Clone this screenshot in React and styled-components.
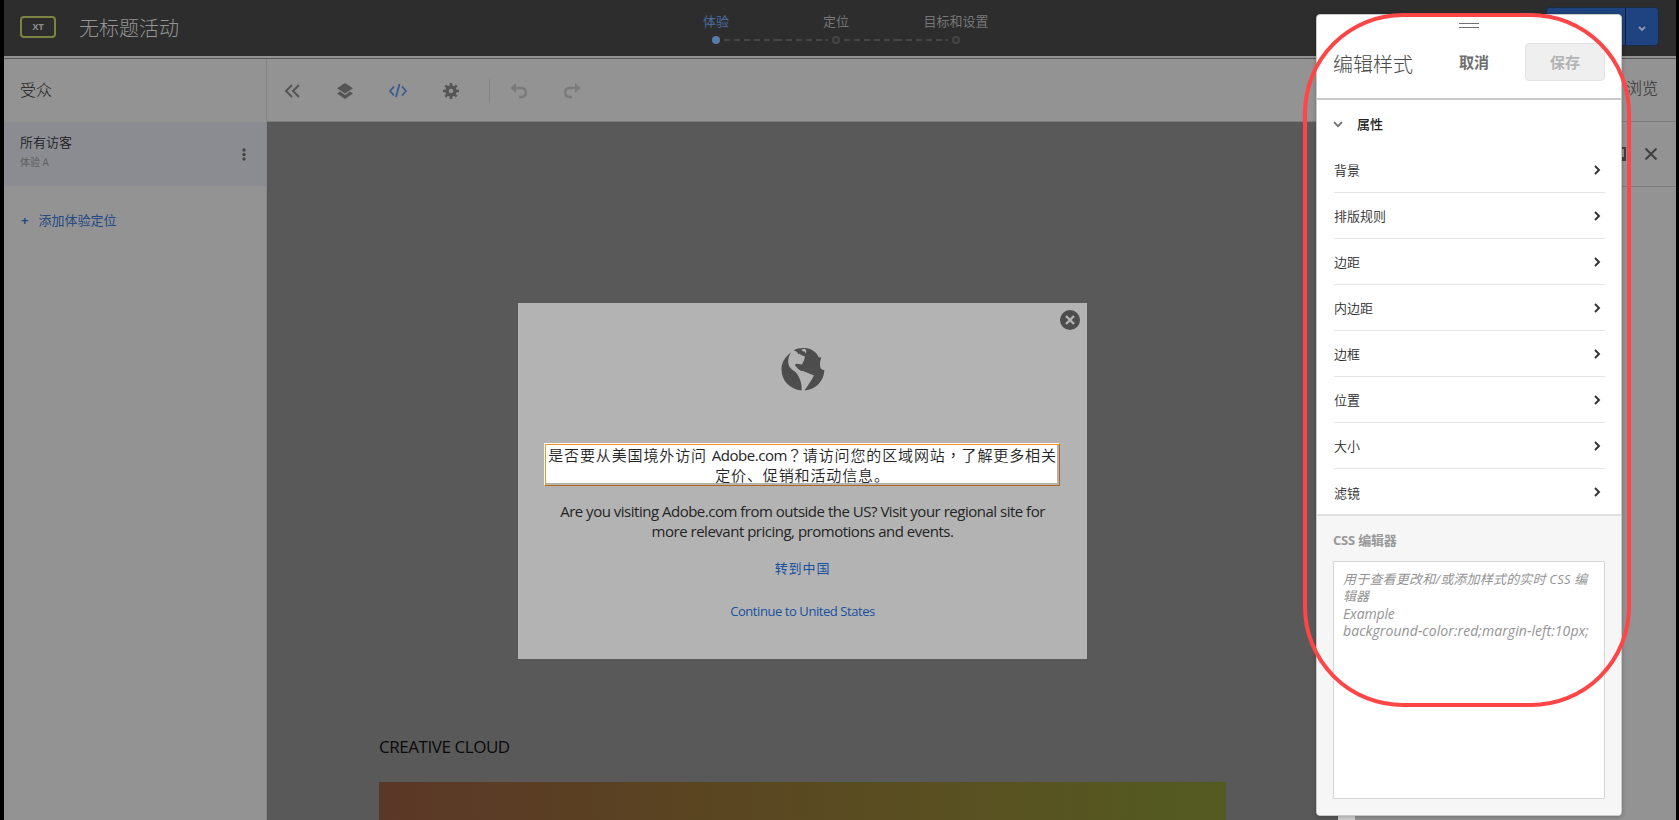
import React from 'react';
import styled, { createGlobalStyle } from 'styled-components';

const Global = createGlobalStyle`
  * { box-sizing: border-box; }
  body { margin: 0; background: #000; font-family: "Open Sans", "Noto Sans CJK SC", sans-serif; }
  button, textarea { font-family: inherit; }
`;

const Frame = styled.div`
  position: relative;
  display: flex;
  flex-direction: column;
  width: 1679px;
  height: 820px;
  padding: 0 3px 0 4px;
  overflow: hidden;
  background: #000;
`;

const Header = styled.header`
  flex: none;
  display: flex;
  justify-content: space-between;
  height: 56px;
  padding-left: 16px;
  background: #2d2d2d;
`;
const HeaderLeft = styled.div`
  display: flex;
  width: 620px;
`;
const TypeBadge = styled.div`
  width: 36px;
  height: 22px;
  margin-top: 16px;
  border: 2px solid #7d8442;
  border-radius: 4px;
  color: #8d8d8d;
  font-size: 9px;
  font-weight: 700;
  line-height: 17px;
  text-align: center;
`;
const ActivityName = styled.h1`
  margin: 0 0 0 23px;
  font-size: 20px;
  font-weight: 300;
  line-height: 58px;
  color: #959595;
`;
const Steps = styled.ol`
  display: flex;
  flex: 1;
  list-style: none;
  margin: 0;
  padding: 0 0 0 16px;
`;
const Step = styled.li`
  display: flex;
  flex-direction: column;
  align-items: center;
  width: 120px;
  color: ${(p) => (p.$active ? '#4a6d9f' : '#767676')};
`;
const StepLabel = styled.span`
  margin-top: 11px;
  font-size: 13px;
  line-height: 20px;
`;
const StepTrack = styled.div`
  display: grid;
  grid-template-columns: 56px 8px 56px;
  align-items: center;
  height: 8px;
  margin-top: 5px;
`;
const Dashes = styled.i`
  height: 2px;
  background: ${(p) => (p.$hidden ? 'none' : 'repeating-linear-gradient(90deg, #444 0 6px, transparent 6px 9.9px)')};
  margin: ${(p) => (p.$start ? '0 0 0 4px' : '0 4px 0 0')};
`;
const Dot = styled.i`
  width: 8px;
  height: 8px;
  border-radius: 50%;
  border: 2px solid ${(p) => (p.$active ? '#587ba8' : '#444')};
  background: ${(p) => (p.$active ? '#587ba8' : 'transparent')};
`;
const SplitButton = styled.div`
  display: flex;
  gap: 1px;
  width: 113px;
  height: 39px;
  margin: 7px 17px 0 0;
  border: 1px solid #1b2c48;
  border-radius: 4px;
  background: #101c30;
  overflow: hidden;
`;
const SplitPart = styled.button`
  flex: ${(p) => (p.$main ? 1 : 'none')};
  width: 32px;
  padding: 0;
  border: 0;
  background: #1f4380;
  color: #8f9bac;
`;

const Seam = styled.div`
  flex: none;
  height: 3px;
  background: #939393;
  border-bottom: 1px solid #585858;
`;
const Workspace = styled.main`
  flex: 1;
  display: flex;
  min-height: 0;
`;
const Sidebar = styled.aside`
  width: 263px;
  border-right: 1px solid #868686;
  background: #939393;
`;
const SidebarTitle = styled.h2`
  margin: 0;
  height: 63px;
  padding-left: 16px;
  font-size: 16px;
  font-weight: 300;
  line-height: 63px;
  color: #1c1c1c;
`;
const Audience = styled.div`
  display: flex;
  justify-content: space-between;
  align-items: center;
  height: 64px;
  padding: 0 17px 0 16px;
  background: #8b8c92;
`;
const AudienceName = styled.div`
  margin-top: -5px;
  font-size: 13px;
  font-weight: 350;
  line-height: 20px;
  color: #1c1c1c;
`;
const AudienceNote = styled.div`
  margin-top: 1px;
  font-size: 10px;
  line-height: 18px;
  color: #606060;
`;
const AddLink = styled.a`
  display: flex;
  gap: 10px;
  margin: 24px 0 0 17px;
  font-size: 13px;
  line-height: 20px;
  color: #224985;
`;

const Stage = styled.section`
  display: flex;
  flex-direction: column;
  width: 1088px;
`;
const Toolbar = styled.div`
  flex: none;
  display: flex;
  align-items: center;
  height: 63px;
  padding: 1px 0 0 13px;
  gap: 29px;
  border-bottom: 1px solid #7c7c7c;
  background: #939393;
  color: #555;
`;
const ToolIcon = styled.svg`
  flex: none;
  width: 24px;
  height: 24px;
  fill: none;
  stroke: currentColor;
  stroke-width: 2;
  color: ${(p) => p.$tone || '#555'};
`;
const ToolRule = styled.i`
  width: 1px;
  height: 24px;
  margin: 0 -12px 0 -3px;
  background: #858585;
`;
const Viewport = styled.div`
  flex: 1;
  display: flex;
  min-height: 0;
`;
const Page = styled.div`
  display: flex;
  flex-direction: column;
  align-items: center;
  width: 1071px;
  padding-top: 181px;
  background: #595959;
`;
const Scrollbar = styled.div`
  width: 17px;
  background: #d2d2d2;
`;
const Modal = styled.div`
  flex: none;
  display: flex;
  flex-direction: column;
  align-items: center;
  width: 569px;
  height: 356px;
  background: #b3b3b3;
  color: #242424;
`;
const ModalTop = styled.div`
  align-self: stretch;
  display: flex;
  justify-content: flex-end;
  padding: 7px 7px 0 0;
`;
const Globe = styled.svg`
  width: 44px;
  height: 44px;
  margin-top: 17px;
`;
const SelectedText = styled.div`
  width: 515px;
  height: 42px;
  margin-top: 53px;
  border: 1px solid;
  border-color: #f7931e #b5671a #b5671a #f7931e;
  box-shadow: -1px -1px 0 #fff;
  background: linear-gradient(#fff, #fff) 0 0 / 511px 38px no-repeat #b3b3b3;
  font-size: 15px;
  font-weight: 350;
  letter-spacing: 0.87px;
  line-height: 20px;
  text-align: center;
  white-space: nowrap;
`;
const Latin = styled.span`
  font-weight: 400;
  letter-spacing: -0.45px;
`;
const MidPunct = styled.span`
  font-family: "Noto Sans CJK TC", sans-serif;
`;
const Paragraph = styled.p`
  margin: 15px 0 0;
  font-size: 15px;
  letter-spacing: -0.49px;
  line-height: 20px;
  text-align: center;
`;
const ModalLink = styled.a`
  margin-top: ${(p) => p.$top}px;
  font-size: 13px;
  letter-spacing: ${(p) => p.$spacing}px;
  line-height: 20px;
  color: #17509f;
`;
const SectionTitle = styled.h3`
  align-self: flex-start;
  margin: 76px 0 0 112px;
  font-size: 17px;
  font-weight: 400;
  letter-spacing: -0.45px;
  line-height: 24px;
  color: #0a0a0a;
`;
const Hero = styled.div`
  width: 847px;
  height: 60px;
  margin-top: 23px;
  flex: none;
  background: linear-gradient(90deg, #5b3727, #5a4521 38%, #595121 70%, #535b21);
`;

const Inspector = styled.aside`
  flex: 1;
  background: #939393;
`;
const InspectorRow = styled.div`
  display: flex;
  align-items: center;
  justify-content: flex-end;
  height: ${(p) => p.$height}px;
  padding: 0 18px ${(p) => p.$lift || 0}px 0;
  gap: 18px;
  border-bottom: 1px solid #7c7c7c;
  font-size: 16px;
  font-weight: 350;
  color: #444;
`;

const Panel = styled.section`
  position: absolute;
  left: 1316px;
  top: 14px;
  display: flex;
  flex-direction: column;
  width: 306px;
  height: 802px;
  border: 1px solid #c9c9c9;
  border-radius: 4px;
  background: #fff;
  box-shadow: 0 1px 4px rgba(0, 0, 0, 0.25);
  overflow: hidden;
`;
const Grip = styled.div`
  flex: none;
  align-self: center;
  width: 20px;
  height: 5px;
  margin-top: 8px;
  border: solid #707070;
  border-width: 1px 0;
`;
const PanelHeader = styled.div`
  flex: none;
  display: flex;
  align-items: center;
  height: 72px;
  padding: 0 16px 0;
  border-bottom: 2px solid #c9c9c9;
`;
const PanelTitle = styled.h2`
  flex: 1;
  margin: 0;
  font-size: 20px;
  font-weight: 300;
  color: #4a4a4a;
`;
const PanelButton = styled.button`
  width: ${(p) => p.$width}px;
  height: 38px;
  margin: 0 ${(p) => p.$gap || 0}px 2px 0;
  padding: 0 0 1px;
  border: 1px solid ${(p) => (p.$disabled ? '#e3e3e3' : 'transparent')};
  border-radius: 4px;
  background: ${(p) => (p.$disabled ? '#efefef' : 'none')};
  color: ${(p) => (p.$disabled ? '#b3b3b3' : '#6e6e6e')};
  font-size: 15px;
  font-weight: 700;
`;
const GroupTitle = styled.div`
  flex: none;
  display: flex;
  align-items: center;
  gap: 14px;
  height: 47px;
  padding-left: 16px;
  font-size: 13px;
  font-weight: 500;
  color: #222;
  svg { margin-top: 2px; }
`;
const PropertyList = styled.ul`
  list-style: none;
  margin: 0;
  padding: 0 16px 0 17px;
`;
const Property = styled.li`
  display: flex;
  align-items: center;
  justify-content: space-between;
  height: 46px;
  padding-right: 4px;
  border-bottom: 1px solid #e6e6e6;
  font-size: 13px;
  font-weight: 350;
  color: #2c2c2c;
  &:last-child { border-bottom: 0; }
`;
const Editor = styled.div`
  flex: 1;
  display: flex;
  flex-direction: column;
  margin-top: -1px;
  padding: 14px 16px;
  border-top: 2px solid #e0e0e0;
  background: #f6f6f6;
`;
const EditorTitle = styled.label`
  font-size: 13px;
  font-weight: 700;
  letter-spacing: -0.2px;
  line-height: 20px;
  color: #999;
`;
const CssInput = styled.div`
  height: 238px;
  margin-top: 11px;
  padding: 9px 0 0 9px;
  border: 1px solid #d5d5d5;
  background: #fff;
  color: #949494;
  font-style: italic;
  white-space: pre;
`;
const CodeLine = styled.div`
  height: 17px;
  font-size: ${(p) => p.$size || 13}px;
  line-height: 17px;
  letter-spacing: ${(p) => p.$spacing || 0}px;
`;
const Callout = styled.div`
  position: absolute;
  left: 1303px;
  top: 13px;
  width: 328px;
  height: 694px;
  border: 4px solid #ff4545;
  border-radius: 100px;
  pointer-events: none;
`;

const properties = ['背景', '排版规则', '边距', '内边距', '边框', '位置', '大小', '滤镜'];
const steps = ['体验', '定位', '目标和设置'];

const ToolIcons = () => (
  <>
    <ToolIcon><path d="M12 6 6 12l6 6M19 6l-6 6 6 6" /></ToolIcon>
    <ToolIcon>
      <path fill="currentColor" stroke="none" d="M12 4 20 9.3 12 14.5 4 9.3ZM4 14.5l3-2 5 3.4 5-3.4 3 2L12 20Z" />
    </ToolIcon>
    <ToolIcon $tone="#395b91"><path d="M8 7.5 4 12l4 4.500M16 7.500l4 4.500-4 4.500M13.500 5l-3.500 13" strokeWidth="1.8" /></ToolIcon>
    <ToolIcon>
      <circle cx="12" cy="12" r="4" strokeWidth="3.4" />
      <path strokeWidth="2.6" d="M12 4v3M12 17v3M4 12h3M17 12h3M6.3 6.3l2 2M15.7 15.7l2 2M6.3 17.7l2-2M15.7 8.3l2-2" />
    </ToolIcon>
    <ToolRule />
    <ToolIcon $tone="#7a7a7a">
      <path d="M8 9h7.2a4.6 4.6 0 0 1 0 9H12" strokeWidth="2.4" /><path fill="currentColor" stroke="none" d="M9 4v10L3.5 9Z" />
    </ToolIcon>
    <ToolIcon $tone="#7a7a7a">
      <path d="M16 9H8.800a4.600 4.600 0 0 0 0 9H12" strokeWidth="2.4" /><path fill="currentColor" stroke="none" d="M15 4v10L20.500 9Z" />
    </ToolIcon>
  </>
);

export default function App() {
  return (
    <Frame>
      <Global />
      <Header>
        <HeaderLeft>
          <TypeBadge>XT</TypeBadge>
          <ActivityName>无标题活动</ActivityName>
        </HeaderLeft>
        <Steps>
          {steps.map((s, i) => (
            <Step key={s} $active={i === 0}>
              <StepLabel>{s}</StepLabel>
              <StepTrack>
                <Dashes $hidden={i === 0} />
                <Dot $active={i === 0} />
                <Dashes $start $hidden={i === 2} />
              </StepTrack>
            </Step>
          ))}
        </Steps>
        <SplitButton>
          <SplitPart $main />
          <SplitPart>
            <svg width="8" height="6" fill="none" stroke="currentColor" strokeWidth="1.8"><path d="m1 1 3 3 3-3" /></svg>
          </SplitPart>
        </SplitButton>
      </Header>
      <Seam />
      <Workspace>
        <Sidebar>
          <SidebarTitle>受众</SidebarTitle>
          <Audience>
            <div>
              <AudienceName>所有访客</AudienceName>
              <AudienceNote>体验 A</AudienceNote>
            </div>
            <svg width="10" height="14" viewBox="0 -1 10 14" fill="#474747">
              <circle cx="5" cy="2" r="1.7" /><circle cx="5" cy="6.5" r="1.7" /><circle cx="5" cy="11" r="1.7" />
            </svg>
          </Audience>
          <AddLink><b>+</b><span>添加体验定位</span></AddLink>
        </Sidebar>
        <Stage>
          <Toolbar><ToolIcons /></Toolbar>
          <Viewport>
            <Page>
              <Modal>
                <ModalTop>
                  <svg width="20" height="20">
                    <circle cx="10" cy="10" r="10" fill="#4d4d4d" />
                    <path d="m6 6 8 8m0-8-8 8" stroke="#b3b3b3" strokeWidth="2.4" />
                  </svg>
                </ModalTop>
                <Globe viewBox="0 0 44 44" fill="#4d4d4d">
                  <path d="M10 5.500C3.500 10 .5 16 .5 22.500c0 11 8.500 20 20 21 .8-5-1-11-4-16-2-3.500-5.500-4.500-7.500-7C6 16 7 10 10 5.500Z" />
                  <path d="M12.500 3.200C18 .5 26 .2 31 3c3 1.600 5.500 4.300 6.500 7l3 .8c-1.500 2.500-1.500 4.500-1.500 8 .5 3 1.500 4.200 4.400 4.200C43 34 35 42.500 23.500 43.500c3-4.500 6-8.500 9.500-15L22 24c-3 .5-5-2.500-8-5.500.5-1.500 1-2 3-1.500l4 .500c1-2 2.500-5 3-8l-4-1.500-1.500-1.500-1 1c-1-3-3-3.500-5-4.300Z" />
                  <path d="M20 2.500c1.500 1.500 2.500 2.500 4 2l.500 2.200c1.300-1 1.200-3.500-.500-5Z" fill="#b3b3b3" />
                </Globe>
                <SelectedText>
                  是否要从美国境外访问 <Latin>Adobe.com</Latin><MidPunct lang="zh-TW">？</MidPunct>请访问您的区域网站<MidPunct lang="zh-TW">，</MidPunct>了解更多相关<br />定价、促销和活动信息。
                </SelectedText>
                <Paragraph>
                  Are you visiting Adobe.com from outside the US? Visit your regional site for<br />
                  more relevant pricing, promotions and events.
                </Paragraph>
                <ModalLink $top={17} $spacing={0.9}>转到中国</ModalLink>
                <ModalLink $top={23} $spacing={-0.43}>Continue to United States</ModalLink>
              </Modal>
              <SectionTitle>CREATIVE CLOUD</SectionTitle>
              <Hero />
            </Page>
            <Scrollbar />
          </Viewport>
        </Stage>
        <Inspector>
          <InspectorRow $height={63} $lift={7}>浏览</InspectorRow>
          <InspectorRow $height={65}>
            <svg width="18" height="14" fill="none" stroke="#404040"><path d="M1 1h16v10.500H1z" strokeWidth="2" /><path d="M0 12h18" strokeWidth="4" /></svg>
            <svg width="14" height="14" fill="none" stroke="#404040" strokeWidth="2"><path d="m1.500 1.500 11 11m0-11-11 11" /></svg>
          </InspectorRow>
        </Inspector>
      </Workspace>
      <Panel>
        <Grip />
        <PanelHeader>
          <PanelTitle>编辑样式</PanelTitle>
          <PanelButton $width={92} $gap={5}>取消</PanelButton>
          <PanelButton $width={80} $disabled>保存</PanelButton>
        </PanelHeader>
        <GroupTitle>
          <svg width="10" height="7" fill="none" stroke="#6e6e6e" strokeWidth="1.7"><path d="m1 1.2 4 4 4-4" /></svg>
          属性
        </GroupTitle>
        <PropertyList>
          {properties.map((p) => (
            <Property key={p}>
              {p}
              <svg width="8" height="10" fill="none" stroke="#323232" strokeWidth="1.9"><path d="m2 1 4 4-4 4" /></svg>
            </Property>
          ))}
        </PropertyList>
        <Editor>
          <EditorTitle>CSS 编辑器</EditorTitle>
          <CssInput>
            <CodeLine $spacing={0.2}>用于查看更改和/或添加样式的实时 CSS 编</CodeLine>
            <CodeLine>辑器</CodeLine>
            <CodeLine $size={14} $spacing={-0.15}>Example</CodeLine>
            <CodeLine $size={14} $spacing={0.08}>background-color:red;margin-left:10px;</CodeLine>
          </CssInput>
        </Editor>
      </Panel>
      <Callout />
    </Frame>
  );
}
